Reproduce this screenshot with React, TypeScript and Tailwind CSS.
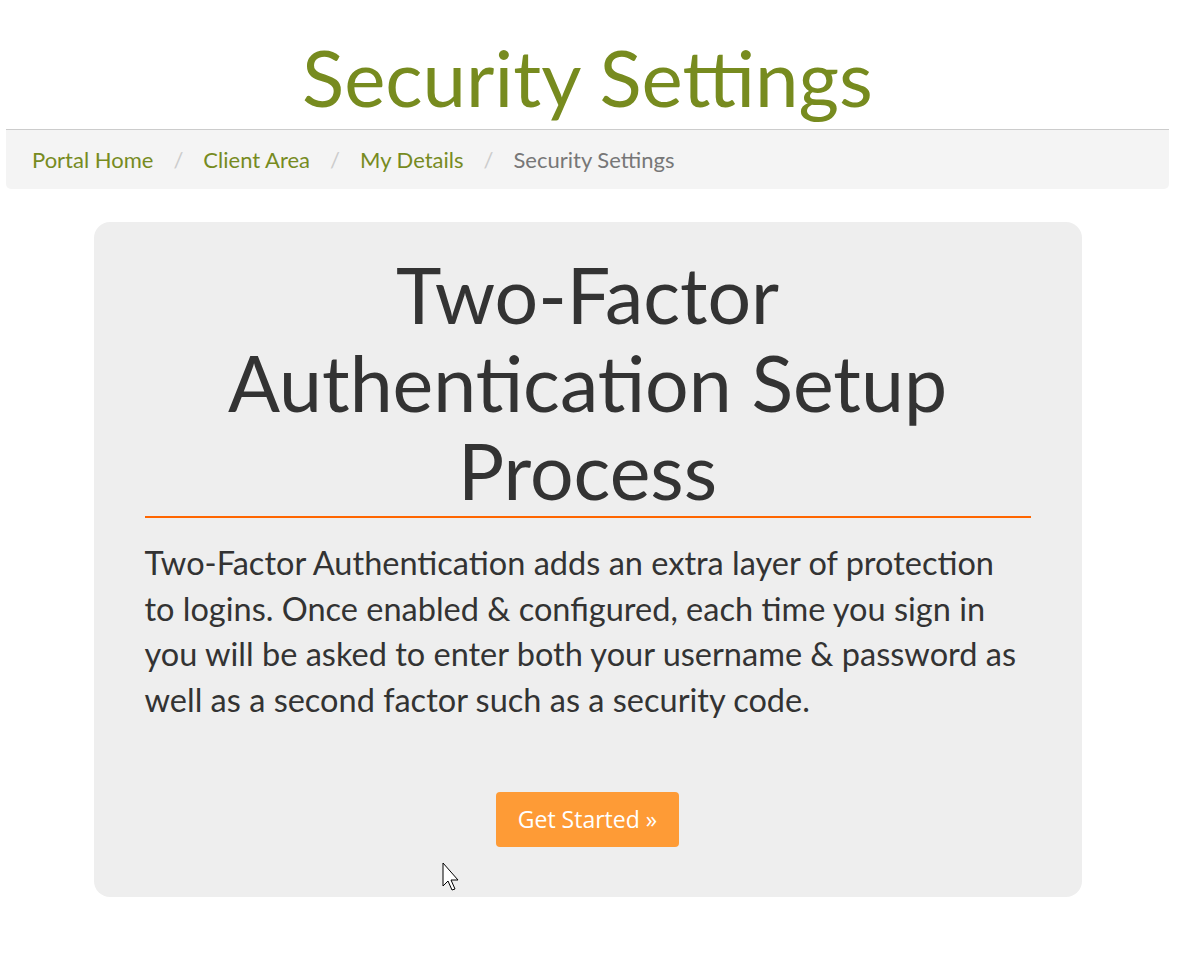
import { ReactNode } from "react"

const font = { fontFamily: "Lato, 'Noto Sans', sans-serif" }

function Crumb({ children, last }: { children: ReactNode; last?: boolean }) {
  return (
    <li className="flex items-center">
      <span className={last ? "text-[#777777]" : "text-[#778b1f]"}>{children}</span>
      {!last && <span className="px-[20px] text-[#cccccc]">/</span>}
    </li>
  )
}

export default function App() {
  return (
    <div className="min-h-screen bg-white text-[#333333]" style={font}>
      <div className="relative w-[1175px] px-[6px]">
        <h1 className="pt-[35px] pb-[9px] text-center text-[78px] leading-[85px] text-[#778b1f]">
          Security Settings
        </h1>

        <ol className="flex h-[60px] items-center rounded-b-[5px] border-t border-[#cccccc] bg-[#f4f4f4] px-[26px] text-[22px]">
          <Crumb>Portal Home</Crumb>
          <Crumb>Client Area</Crumb>
          <Crumb>My Details</Crumb>
          <Crumb last>Security Settings</Crumb>
        </ol>

        <div className="mx-auto mt-[33px] w-[988px] rounded-[16px] bg-[#eeeeee] px-[51px] pt-[28px] pb-[50px]">
          <h2 className="pb-[2px] text-center text-[77px] leading-[88px] text-[#333333]">
            Two-Factor
            <br />
            Authentication Setup
            <br />
            Process
          </h2>
          <div className="h-[2px] bg-[#ff6600]" />
          <p className="mt-[22px] text-[32.5px] leading-[45.5px]">
            Two-Factor Authentication adds an extra layer of protection
            <br />
            to logins. Once enabled &amp; configured, each time you sign in
            <br />
            you will be asked to enter both your username &amp; password as
            <br />
            well as a second factor such as a security code.
          </p>
          <div className="mt-[70px] flex justify-center">
            <button
              className="h-[55px] w-[183px] rounded-[4px] bg-[#fe9b36] text-[23px] text-white"
              style={{ fontFamily: "'Open Sans', sans-serif" }}
            >
              Get Started »
            </button>
          </div>
        </div>

        <svg className="absolute left-[442px] top-[862px]" width="20" height="30" viewBox="0 0 20 30">
          <path d="M1 1 L1 24 L6 19 L10 28 L13 27 L9 18 L16 18 Z" fill="white" stroke="black" strokeWidth="1" />
        </svg>
      </div>
    </div>
  )
}
